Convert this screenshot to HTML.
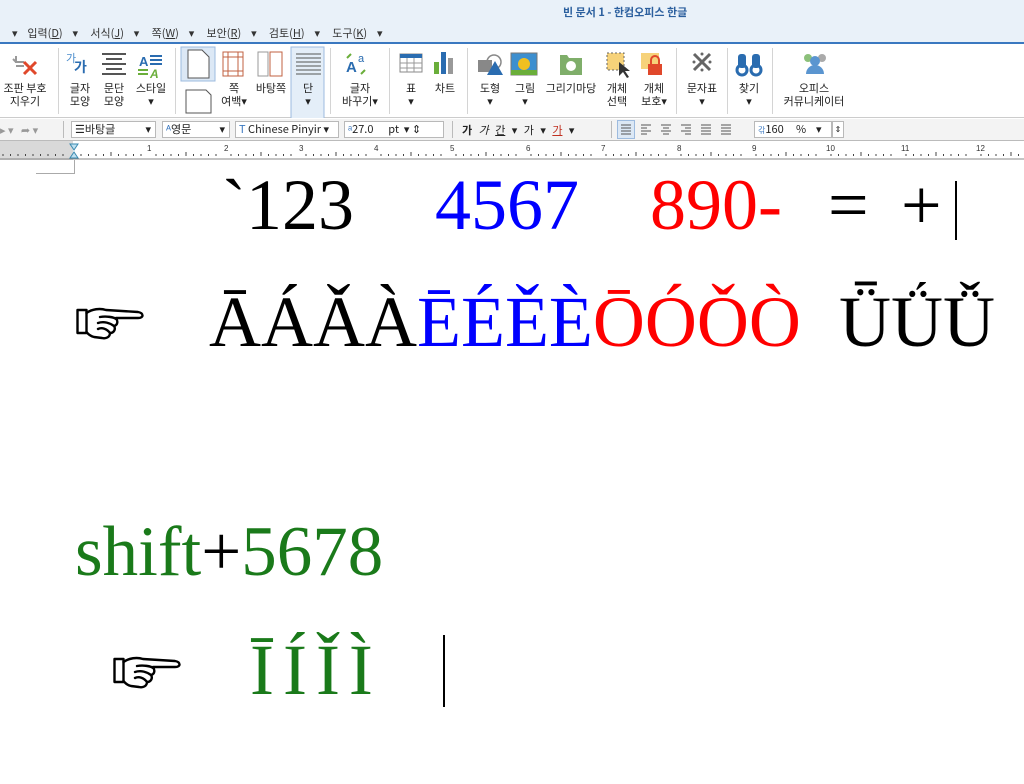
<!DOCTYPE html>
<html><head><meta charset="utf-8"><style>
*{margin:0;padding:0;box-sizing:border-box}
body{width:1024px;height:784px;overflow:hidden;background:#fff;position:relative;font-family:"Liberation Sans","Noto Sans CJK KR",sans-serif;}
.a{position:absolute;white-space:nowrap}
.ui{font-size:11px;color:#222;font-family:"Noto Sans CJK KR","Liberation Sans",sans-serif}
.lbl{position:absolute;font-size:11px;line-height:13px;text-align:center;color:#222;font-family:"Noto Sans CJK KR",sans-serif;white-space:nowrap}
.sep{position:absolute;width:1px;background:#d4d4d4}
.serif{font-family:"Liberation Serif",serif;position:absolute;white-space:nowrap;line-height:1}
.combo{position:absolute;top:121px;height:17px;border:1px solid #b9b9b9;background:#fff;font-size:11px;line-height:15px;padding-left:3px;color:#222;font-family:"Noto Sans CJK KR","Liberation Sans",sans-serif}
</style></head><body>
<div class="a" style="left:0;top:0;width:1024px;height:43px;background:#e9f1f9"></div>
<div class="a" style="left:563px;top:4px;font-size:11px;font-weight:bold;color:#2b5f9e;font-family:'Noto Sans CJK KR',sans-serif">빈 문서 1 - 한컴오피스 한글</div>
<div class="a ui" style="left:12px;top:25px;word-spacing:0;color:#333">▾&nbsp;&nbsp;&nbsp;&nbsp;입력(<u>D</u>)&nbsp;&nbsp;&nbsp;&nbsp;▾&nbsp;&nbsp;&nbsp;&nbsp;&nbsp;서식(<u>J</u>)&nbsp;&nbsp;&nbsp;&nbsp;▾&nbsp;&nbsp;&nbsp;&nbsp;&nbsp;쪽(<u>W</u>)&nbsp;&nbsp;&nbsp;&nbsp;▾&nbsp;&nbsp;&nbsp;&nbsp;&nbsp;보안(<u>R</u>)&nbsp;&nbsp;&nbsp;&nbsp;▾&nbsp;&nbsp;&nbsp;&nbsp;&nbsp;검토(<u>H</u>)&nbsp;&nbsp;&nbsp;&nbsp;▾&nbsp;&nbsp;&nbsp;&nbsp;&nbsp;도구(<u>K</u>)&nbsp;&nbsp;&nbsp;&nbsp;▾</div>
<div class="a" style="left:0;top:42px;width:1024px;height:2px;background:#3a78c0"></div>
<div class="a" style="left:0;top:44px;width:1024px;height:74px;background:#fff;border-bottom:1px solid #ccc"></div>
<div class="sep" style="left:58px;top:48px;height:66px"></div>
<div class="sep" style="left:175px;top:48px;height:66px"></div>
<div class="sep" style="left:330px;top:48px;height:66px"></div>
<div class="sep" style="left:389px;top:48px;height:66px"></div>
<div class="sep" style="left:467px;top:48px;height:66px"></div>
<div class="sep" style="left:676px;top:48px;height:66px"></div>
<div class="sep" style="left:727px;top:48px;height:66px"></div>
<div class="sep" style="left:772px;top:48px;height:66px"></div>
<svg class="a" style="left:0;top:44px" width="1024" height="74">
<g fill="none" stroke-width="3">
<path d="M16 12 v6 h8 M16 18 l-3 -3 M24 22 h-8" stroke="#999" stroke-width="2"/>
<path d="M24 18 l12 12 M36 18 l-12 12" stroke="#e0482b"/>
</g>
<text x="66" y="18" font-size="11" fill="#4a8ccc" font-family="Noto Sans CJK KR">가</text>
<text x="74" y="28" font-size="14" font-weight="bold" fill="#2a6cb0" font-family="Noto Sans CJK KR">가</text>
<g stroke="#555" stroke-width="2"><path d="M102 10h24M106 15h16M102 20h24M106 25h16M102 30h24"/></g>
<text x="139" y="22" font-size="13" font-weight="bold" fill="#2a6cb0">A</text>
<path d="M150 12h12M150 16h12M150 20h12" stroke="#2a6cb0" stroke-width="2"/>
<path d="M138 26h10M138 30h10" stroke="#6aae3a" stroke-width="2"/>
<text x="150" y="34" font-size="12" font-weight="bold" fill="#6aae3a" font-style="italic">A</text>
<rect x="181" y="3" width="34" height="34" fill="#dce8f5" stroke="#9dbbdf"/>
<path d="M188 6h14l7 7v21h-21z" fill="#fff" stroke="#555"/>
<path d="M186 46h20l5 5v18h-25z" fill="#fff" stroke="#555"/>
<rect x="223" y="8" width="20" height="24" fill="none" stroke="#c06040"/>
<path d="M228 8v24M238 8v24M223 13h20M223 27h20" stroke="#c06040"/>
<rect x="258" y="8" width="10" height="24" fill="none" stroke="#999"/><rect x="270" y="8" width="12" height="24" fill="none" stroke="#c06040"/>
<rect x="291" y="3" width="33" height="73" fill="#e4eef8" stroke="#9dbbdf"/>
<g stroke="#555"><path d="M296 10h25M296 14h25M296 18h25M296 22h25M296 26h25M296 30h25"/></g>
<text x="346" y="28" font-size="15" font-weight="bold" fill="#2a6cb0">A</text><text x="358" y="18" font-size="11" fill="#2a6cb0">a</text>
<path d="M347 14 l4 -4 M365 26 l-4 4" stroke="#6aae3a" stroke-width="2"/>
<rect x="400" y="10" width="22" height="18" fill="#fff" stroke="#888"/><rect x="400" y="10" width="22" height="4" fill="#2a6cb0"/>
<path d="M400 19h22M400 24h22M407 14v14M414 14v14" stroke="#999"/>
<rect x="434" y="18" width="5" height="12" fill="#6aae3a"/><rect x="441" y="8" width="5" height="22" fill="#2a6cb0"/><rect x="448" y="14" width="5" height="16" fill="#999"/>
<rect x="478" y="16" width="14" height="12" fill="#888"/><circle cx="494" cy="18" r="7" fill="none" stroke="#888" stroke-width="1.5"/><path d="M487 31l8-14 8 14z" fill="#2a6cb0"/>
<rect x="511" y="9" width="26" height="22" fill="#3d8fcf" stroke="#777"/><circle cx="524" cy="20" r="6" fill="#f0c020"/><rect x="511" y="26" width="26" height="5" fill="#6aae3a"/>
<path d="M560 11h7l2 3h13v17h-22z" fill="#7fae6a"/><circle cx="571" cy="22" r="5" fill="#fff"/>
<rect x="607" y="9" width="17" height="17" fill="#f6d27a" stroke="#666" stroke-dasharray="2 2"/><path d="M619 18l0 14 4-4 4 6 2-1-4-6 5 0z" fill="#333"/>
<rect x="641" y="9" width="18" height="16" fill="#f6d27a"/><rect x="648" y="20" width="14" height="11" fill="#e0482b"/><path d="M651 20v-4a4 4 0 0 1 8 0v4" fill="none" stroke="#e0482b" stroke-width="2"/>
<path d="M694 10l16 16M710 10l-16 16" stroke="#666" stroke-width="3"/><circle cx="702" cy="10" r="1.5" fill="#666"/><circle cx="702" cy="26" r="1.5" fill="#666"/><circle cx="694" cy="18" r="1.5" fill="#666"/><circle cx="710" cy="18" r="1.5" fill="#666"/>
<circle cx="742" cy="26" r="5" fill="none" stroke="#2a6cb0" stroke-width="3"/><circle cx="756" cy="26" r="5" fill="none" stroke="#2a6cb0" stroke-width="3"/><rect x="738" y="10" width="8" height="14" rx="3" fill="#2a6cb0"/><rect x="752" y="10" width="8" height="14" rx="3" fill="#2a6cb0"/>
<circle cx="808" cy="14" r="4" fill="#8cc07a"/><circle cx="822" cy="14" r="4" fill="#aaa"/><circle cx="815" cy="17" r="5" fill="#5a95d0"/><path d="M806 30a9 9 0 0 1 18 0z" fill="#5a95d0"/>
</svg>
<div class="lbl" style="left:2px;top:82px;width:46px">조판 부호<br>지우기</div>
<div class="lbl" style="left:66px;top:82px;width:28px">글자<br>모양</div>
<div class="lbl" style="left:100px;top:82px;width:28px">문단<br>모양</div>
<div class="lbl" style="left:132px;top:82px;width:38px">스타일<br>▾</div>
<div class="lbl" style="left:220px;top:82px;width:28px">쪽<br>여백▾</div>
<div class="lbl" style="left:252px;top:82px;width:38px">바탕쪽</div>
<div class="lbl" style="left:294px;top:82px;width:28px">단<br>▾</div>
<div class="lbl" style="left:340px;top:82px;width:40px">글자<br>바꾸기▾</div>
<div class="lbl" style="left:400px;top:82px;width:22px">표<br>▾</div>
<div class="lbl" style="left:430px;top:82px;width:30px">차트</div>
<div class="lbl" style="left:475px;top:82px;width:30px">도형<br>▾</div>
<div class="lbl" style="left:510px;top:82px;width:30px">그림<br>▾</div>
<div class="lbl" style="left:543px;top:82px;width:56px">그리기마당</div>
<div class="lbl" style="left:602px;top:82px;width:30px">개체<br>선택</div>
<div class="lbl" style="left:638px;top:82px;width:32px">개체<br>보호▾</div>
<div class="lbl" style="left:683px;top:82px;width:38px">문자표<br>▾</div>
<div class="lbl" style="left:734px;top:82px;width:30px">찾기<br>▾</div>
<div class="lbl" style="left:778px;top:82px;width:72px">오피스<br>커뮤니케이터</div>
<div class="a" style="left:0;top:119px;width:1024px;height:22px;background:#f3f3f3;border-bottom:1px solid #bbb"></div>
<div class="a ui" style="left:0;top:122px;color:#999">▸ ▾ &nbsp; ➦ ▾</div>
<div class="sep" style="left:63px;top:121px;height:17px;background:#bbb"></div>
<div class="combo" style="left:71px;width:85px">☰바탕글<span style="float:right;padding-right:4px">▾</span></div>
<div class="combo" style="left:162px;width:68px"><span style="color:#3a78c0">ᴬ</span>영문<span style="float:right;padding-right:4px">▾</span></div>
<div class="combo" style="left:235px;width:104px"><span style="color:#3a78c0">T</span> Chinese Pinyir ▾</div>
<div class="combo" style="left:344px;width:100px"><span style="color:#3a78c0">ᵃ</span>27.0&nbsp;&nbsp;&nbsp;&nbsp;&nbsp;&nbsp;pt&nbsp;&nbsp;▾ ⇕</div>
<div class="sep" style="left:452px;top:121px;height:17px;background:#bbb"></div>
<div class="a ui" style="left:462px;top:122px;word-spacing:4px"><b>가</b> <i>가</i> <u>간</u> ▾ 가 ▾ <u style="color:#c03020">가</u> ▾</div>
<div class="sep" style="left:611px;top:121px;height:17px;background:#bbb"></div>
<svg class="a" style="left:617px;top:120px" width="125" height="20"><rect x="0.5" y="0.5" width="17" height="18" fill="#dce8f5" stroke="#9dbbdf"/><g stroke="#555"><path d="M4 5h10M4 8h10M4 11h10M4 14h10"/><path d="M24 5h10M24 8h6M24 11h10M24 14h6"/><path d="M44 5h10M46 8h6M44 11h10M46 14h6"/><path d="M64 5h10M68 8h6M64 11h10M68 14h6"/><path d="M84 5h10M84 8h10M84 11h10M84 14h10"/><path d="M104 5h10M104 8h10M104 11h10M104 14h10"/></g></svg>
<div class="combo" style="left:754px;width:78px;top:121px"><span style="font-size:8px;color:#3a78c0">갂</span>160&nbsp;&nbsp;&nbsp;&nbsp;&nbsp;%&nbsp;&nbsp;&nbsp;&nbsp;▾</div>
<div class="combo" style="left:832px;width:12px;padding:0;font-size:8px;text-align:center">⇕</div>
<svg class="a" style="left:0;top:141px" width="1024" height="19">
<rect width="1024" height="19" fill="#fff"/><rect width="73" height="19" fill="#d9d9d9"/>
<line x1="0" y1="18" x2="1024" y2="18" stroke="#888"/>
<path d="M70 3h8l-4 6zM70 17h8l-4-6z" fill="#bfe0f0" stroke="#3a8ab0"/>
<g font-size="8" fill="#333" font-family="Liberation Sans">
<text x="147" y="10">1</text><text x="224" y="10">2</text><text x="299" y="10">3</text><text x="374" y="10">4</text><text x="450" y="10">5</text><text x="526" y="10">6</text><text x="601" y="10">7</text><text x="677" y="10">8</text><text x="752" y="10">9</text><text x="826" y="10">10</text><text x="901" y="10">11</text><text x="976" y="10">12</text>
</g>
<path stroke="#444" d="M3 13v2M10.5 13v2M18 13v2M25.5 13v2M33 13v2M40.5 13v2M48 13v2M55.5 13v2M63 13v2M81 13v2M88.5 13v2M96 13v2M103.5 13v2M111 11v4M118.5 13v2M126 13v2M133.5 13v2M141 13v2M156 13v2M163.5 13v2M171 13v2M178.5 13v2M186 11v4M193.5 13v2M201 13v2M208.5 13v2M216 13v2M231 13v2M238.5 13v2M246 13v2M253.5 13v2M261 11v4M268.5 13v2M276 13v2M283.5 13v2M291 13v2M306 13v2M313.5 13v2M321 13v2M328.5 13v2M336 11v4M343.5 13v2M351 13v2M358.5 13v2M366 13v2M381 13v2M388.5 13v2M396 13v2M403.5 13v2M411 11v4M418.5 13v2M426 13v2M433.5 13v2M441 13v2M456 13v2M463.5 13v2M471 13v2M478.5 13v2M486 11v4M493.5 13v2M501 13v2M508.5 13v2M516 13v2M531 13v2M538.5 13v2M546 13v2M553.5 13v2M561 11v4M568.5 13v2M576 13v2M583.5 13v2M591 13v2M606 13v2M613.5 13v2M621 13v2M628.5 13v2M636 11v4M643.5 13v2M651 13v2M658.5 13v2M666 13v2M681 13v2M688.5 13v2M696 13v2M703.5 13v2M711 11v4M718.5 13v2M726 13v2M733.5 13v2M741 13v2M756 13v2M763.5 13v2M771 13v2M778.5 13v2M786 11v4M793.5 13v2M801 13v2M808.5 13v2M816 13v2M831 13v2M838.5 13v2M846 13v2M853.5 13v2M861 11v4M868.5 13v2M876 13v2M883.5 13v2M891 13v2M906 13v2M913.5 13v2M921 13v2M928.5 13v2M936 11v4M943.5 13v2M951 13v2M958.5 13v2M966 13v2M981 13v2M988.5 13v2M996 13v2M1003.5 13v2M1011 11v4M1018.5 13v2"/>
</svg>
<div class="a" style="left:36px;top:173px;width:38px;height:1px;background:#aaa"></div>
<div class="a" style="left:74px;top:160px;width:1px;height:14px;background:#aaa"></div>
<!-- hand icon defs reused -->
<svg class="a" style="left:76px;top:305px" width="70" height="36" viewBox="0 0 70 36">
<g fill="none" stroke="#000" stroke-width="2.4" stroke-linejoin="round" stroke-linecap="round">
<rect x="1.5" y="5" width="9" height="23" fill="#fff"/>
<path d="M10.5 8 C16 4 24 3 30 5 L62 7 C68 8 68 13 62 13 L40 13 C42 16 42 20 38 21 C40 24 38 28 34 28 C34 32 30 34 26 33 L18 32 C14 31 12 29 10.5 27"/>
<path d="M24 12 C30 11 38 12 40 14 M22 18 C28 16 34 18 38 21 M22 24 C26 22 31 24 34 28"/>
</g></svg>
<div class="serif" style="left:222px;top:169px;font-size:72px;color:#000">`123</div>
<div class="serif" style="left:435px;top:169px;font-size:72px;color:#0000ff">4567</div>
<div class="serif" style="left:650px;top:169px;font-size:72px;color:#ff0000">890-</div>
<div class="serif" style="left:828px;top:169px;font-size:72px;color:#000">=</div>
<div class="serif" style="left:901px;top:169px;font-size:72px;color:#000">+</div>
<div class="a" style="left:955px;top:181px;width:2px;height:59px;background:#000"></div>
<div class="serif" style="left:209px;top:286px;font-size:72px"><span style="color:#000">ĀÁǍÀ</span><span style="color:#0000ff">ĒÉĚÈ</span><span style="color:#ff0000">ŌÓǑÒ</span></div>
<div class="serif" style="left:839px;top:286px;font-size:72px;color:#000">ǕǗǙ</div>
<div class="serif" style="left:75px;top:517px;font-size:71px"><span style="color:#1a7a1a">shift</span><span style="color:#000">+</span><span style="color:#1a7a1a">5678</span></div>
<svg class="a" style="left:113px;top:654px" width="70" height="36" viewBox="0 0 70 36">
<g fill="none" stroke="#000" stroke-width="2.4" stroke-linejoin="round" stroke-linecap="round">
<rect x="1.5" y="5" width="9" height="23" fill="#fff"/>
<path d="M10.5 8 C16 4 24 3 30 5 L62 7 C68 8 68 13 62 13 L40 13 C42 16 42 20 38 21 C40 24 38 28 34 28 C34 32 30 34 26 33 L18 32 C14 31 12 29 10.5 27"/>
<path d="M24 12 C30 11 38 12 40 14 M22 18 C28 16 34 18 38 21 M22 24 C26 22 31 24 34 28"/>
</g></svg>
<div class="serif" style="left:250px;top:634px;font-size:72px;color:#1a7a1a;letter-spacing:9px">ĪÍǏÌ</div>
<div class="a" style="left:443px;top:635px;width:2px;height:72px;background:#000"></div>
</body></html>
